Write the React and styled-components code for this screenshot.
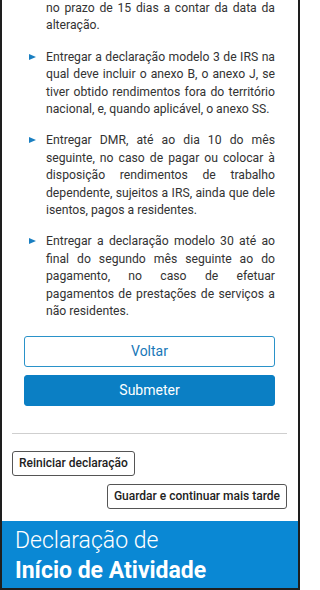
import React from 'react';
import styled, { createGlobalStyle } from 'styled-components';

const GlobalStyle = createGlobalStyle`
  html, body {
    margin: 0;
    padding: 0;
    background: #ffffff;
  }
  body {
    font-family: Roboto, "Noto Sans", "Liberation Sans", sans-serif;
    -webkit-font-smoothing: antialiased;
  }
`;

const Frame = styled.div`
  width: 300px;
  height: 590px;
  box-sizing: border-box;
  border-left: 2px solid #1e1e1e;
  border-right: 2px solid #1e1e1e;
  border-bottom: 2px solid #1e1e1e;
  display: flex;
  flex-direction: column;
  overflow: hidden;
  background: #fff;
`;

const Content = styled.div`
  flex: 1;
  padding: 0 23px 0 22px;
`;

const List = styled.ul`
  list-style: none;
  margin: 0;
  padding: 0;
  display: flex;
  flex-direction: column;
  gap: 14px;
`;

const Item = styled.li`
  position: relative;
  padding-left: 22px;
  font-size: 12.2px;
  line-height: 17.4px;
  color: #333333;
  text-align: justify;

  &::before {
    content: '';
    display: ${(p) => (p.$bullet ? 'block' : 'none')};
    position: absolute;
    left: 5px;
    top: 5px;
    border-left: 7px solid #1a7fc1;
    border-top: 3.5px solid transparent;
    border-bottom: 3.5px solid transparent;
  }
`;

const Actions = styled.div`
  display: flex;
  flex-direction: column;
  gap: 8px;
  margin-top: 15px;
`;

const PrimaryButton = styled.button`
  height: 31px;
  box-sizing: border-box;
  border-radius: 3px;
  font-family: inherit;
  font-size: 14px;
  border: 1px solid ${(p) => (p.$filled ? '#0b7fc4' : '#2a92c9')};
  background: ${(p) => (p.$filled ? '#0b7fc4' : '#ffffff')};
  color: ${(p) => (p.$filled ? '#ffffff' : '#1878b8')};
  padding: 0;
`;

const Divider = styled.hr`
  border: none;
  border-top: 1px solid #cfcfcf;
  margin: 27px -12px 17px -12px;
`;

const SecondaryRow = styled.div`
  display: flex;
  flex-direction: column;
  gap: 8px;
  margin: 0 -12px 0 -12px;
`;

const SecondaryButton = styled.button`
  align-self: ${(p) => (p.$right ? 'flex-end' : 'flex-start')};
  height: 25px;
  box-sizing: border-box;
  padding: 0 6px;
  border: 1px solid #555;
  border-radius: 3px;
  background: #fff;
  font-family: inherit;
  font-size: 12px;
  font-weight: 500;
  color: #222;
`;

const Footer = styled.div`
  margin-top: 10px;
  height: 67px;
  flex-shrink: 0;
  box-sizing: border-box;
  background: #0a88d4;
  color: #fff;
  padding: 3px 13px 0;
  display: flex;
  flex-direction: column;
  justify-content: center;
`;

const FooterLine = styled.div`
  font-size: 23px;
  line-height: 30px;
  font-weight: ${(p) => (p.$bold ? 700 : 300)};
  white-space: nowrap;
`;

const items = [
  { bullet: false, text: 'no prazo de 15 dias a contar da data da alteração.' },
  {
    bullet: true,
    text: 'Entregar a declaração modelo 3 de IRS na qual deve incluir o anexo B, o anexo J, se tiver obtido rendimentos fora do território nacional, e, quando aplicável, o anexo SS.',
  },
  {
    bullet: true,
    text: 'Entregar DMR, até ao dia 10 do mês seguinte, no caso de pagar ou colocar à disposição rendimentos de trabalho dependente, sujeitos a IRS, ainda que dele isentos, pagos a residentes.',
  },
  {
    bullet: true,
    text: 'Entregar a declaração modelo 30 até ao final do segundo mês seguinte ao do pagamento, no caso de efetuar pagamentos de prestações de serviços a não residentes.',
  },
];

export default function App() {
  return (
    <>
      <GlobalStyle />
      <Frame>
        <Content>
          <List>
            {items.map((item, i) => (
              <Item key={i} $bullet={item.bullet}>
                {item.text}
              </Item>
            ))}
          </List>
          <Actions>
            <PrimaryButton>Voltar</PrimaryButton>
            <PrimaryButton $filled>Submeter</PrimaryButton>
          </Actions>
          <Divider />
          <SecondaryRow>
            <SecondaryButton>Reiniciar declaração</SecondaryButton>
            <SecondaryButton $right>Guardar e continuar mais tarde</SecondaryButton>
          </SecondaryRow>
        </Content>
        <Footer>
          <FooterLine>Declaração de</FooterLine>
          <FooterLine $bold>Início de Atividade</FooterLine>
        </Footer>
      </Frame>
    </>
  );
}
